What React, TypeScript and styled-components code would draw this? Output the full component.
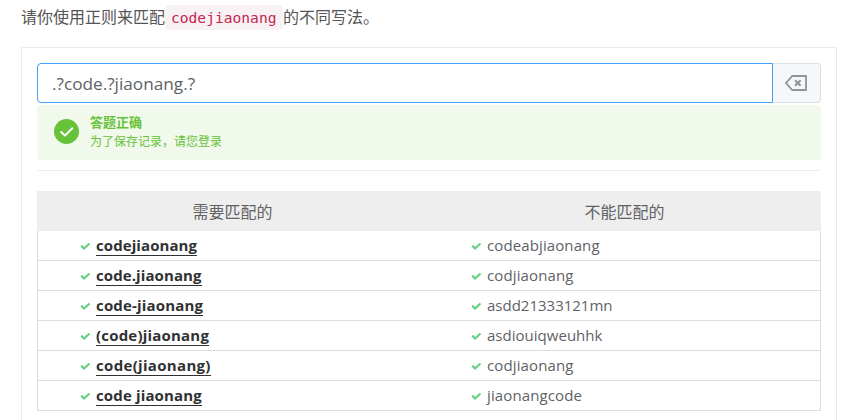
import React from "react";
import styled, { createGlobalStyle } from "styled-components";

const GlobalStyle = createGlobalStyle`
  * { box-sizing: border-box; }
  html, body { margin: 0; padding: 0; background: #fff; }
  body {
    height: 420px;
    overflow: hidden;
    font-family: "Open Sans", "Noto Sans CJK SC", sans-serif;
    color: #606266;
  }
`;

const Page = styled.main`
  height: 420px;
  padding: 5px 13px 0 21px;
  overflow: hidden;
`;

const Prompt = styled.p`
  display: flex;
  align-items: center;
  height: 25px;
  margin: 0 0 17px;
  font-size: 16px;
  line-height: 23px;
  white-space: nowrap;
  color: #555;
  font-family: "Noto Sans CJK SC", sans-serif;

  > span {
    height: 25px;
  }
`;

const InlineCode = styled.code`
  width: 118px;
  height: 25px;
  padding: 0 0 0 6px;
  border-radius: 4px;
  background: #f9f2f4;
  color: #c7254e;
  font: 14.6px/25px "DejaVu Sans Mono", monospace;
`;

const Card = styled.section`
  height: 400px;
  padding: 15px;
  border: 1px solid #ebebeb;
`;

const InputGroup = styled.div`
  display: flex;
  height: 40px;
`;

const Input = styled.input`
  width: 736px;
  height: 40px;
  padding: 0 14px;
  border: 1px solid #409eff;
  border-radius: 4px 0 0 4px;
  outline: none;
  background: #fff;
  color: #606266;
  font: 17.2px "Open Sans", sans-serif;
`;

const ClearButton = styled.button`
  display: flex;
  align-items: center;
  justify-content: center;
  width: 48px;
  height: 40px;
  padding: 0 2px 0 0;
  border: 1px solid #dcdfe6;
  border-left: 0;
  border-radius: 0 4px 4px 0;
  background: #f5f7fa;
  color: #909399;
`;

const Alert = styled.div`
  display: flex;
  align-items: flex-start;
  height: 55px;
  margin-top: 2px;
  padding: 14px 0 0 17px;
  gap: 10px;
  border-radius: 4px;
  background: #f0f9eb;
  color: #67c23a;
  font-family: "Noto Sans CJK SC", sans-serif;
`;

const AlertBody = styled.div`
  margin-top: -7px;
`;

const AlertTitle = styled.div`
  font-size: 13px;
  line-height: 19px;
  font-weight: 700;
`;

const AlertText = styled.div`
  font-size: 12px;
  line-height: 19px;
`;

const Divider = styled.hr`
  height: 1px;
  margin: 10px 0 20px;
  border: 0;
  background: #eee;
`;

const TableHead = styled.div`
  display: grid;
  grid-template-columns: 391px 393px;
  height: 40px;
  background: #eee;
  color: #606266;
  font: 16px/40px "Noto Sans CJK SC", sans-serif;
  text-align: center;
`;

const Row = styled.div`
  display: grid;
  grid-template-columns: 391px 1fr;
  height: 30px;
  border: solid #ddd;
  border-width: 0 1px 1px;
`;

const Cell = styled.div`
  display: flex;
  align-items: flex-start;
  padding-left: 42px;
  gap: 5px;
`;

const CheckIcon = styled.svg`
  width: 11px;
  height: 10px;
  margin-top: 10px;
`;

const Sample = styled.span<{ $matched?: boolean; $spacing: number }>`
  height: 25px;
  font-size: 15px;
  line-height: 28px;
  white-space: pre;
  font-weight: ${(p) => (p.$matched ? 700 : 400)};
  color: ${(p) => (p.$matched ? "#303133" : "#606266")};
  border-bottom: ${(p) => (p.$matched ? "1px solid #303133" : "0")};
  letter-spacing: ${(p) => p.$spacing}px;
`;

const rows: { wanted: string; wantedSpacing: number; unwanted: string; unwantedSpacing: number }[] = [
  { wanted: "codejiaonang", wantedSpacing: 0.08, unwanted: "codeabjiaonang", unwantedSpacing: 0.11 },
  { wanted: "code.jiaonang", wantedSpacing: 0.09, unwanted: "codjiaonang", unwantedSpacing: 0.13 },
  { wanted: "code-jiaonang", wantedSpacing: 0.18, unwanted: "asdd21333121mn", unwantedSpacing: 0 },
  { wanted: "(code)jiaonang", wantedSpacing: 0.2, unwanted: "asdiouiqweuhhk", unwantedSpacing: 0.02 },
  { wanted: "code(jiaonang)", wantedSpacing: 0.32, unwanted: "codjiaonang", unwantedSpacing: 0.13 },
  { wanted: "code jiaonang", wantedSpacing: 0.14, unwanted: "jiaonangcode", unwantedSpacing: 0.12 },
];

const Check = () => (
  <CheckIcon viewBox="0 0 11 10" fill="none">
    <path d="M1.2 4.6 4.1 7.5 9.5 2.5" stroke="#67cf82" strokeWidth="2.2" />
  </CheckIcon>
);

export default function App() {
  return (
    <>
      <GlobalStyle />
      <Page>
        <Prompt>
          <span>请你使用正则来匹配</span>
          <InlineCode>codejiaonang</InlineCode>
          <span>的不同写法。</span>
        </Prompt>
        <Card>
          <InputGroup>
            <Input defaultValue=".?code.?jiaonang.?" spellCheck={false} />
            <ClearButton aria-label="clear">
              <svg width="24" height="18" viewBox="0 0 24 18" fill="none" stroke="currentColor">
                <path d="M8.3 2H22V16H8.3L2 9Z" strokeWidth="1.8" />
                <path d="M11 6.2 16.6 11.8M16.6 6.2 11 11.8" strokeWidth="2" />
              </svg>
            </ClearButton>
          </InputGroup>
          <Alert>
            <svg width="26" height="26" viewBox="0 0 26 26" fill="none">
              <circle cx="12.5" cy="12.5" r="12.5" fill="#67c23a" />
              <path d="M7.2 13 11 16.6 18.3 9.2" stroke="#fff" strokeWidth="2" strokeLinecap="round" strokeLinejoin="round" />
            </svg>
            <AlertBody>
              <AlertTitle>答题正确</AlertTitle>
              <AlertText>为了保存记录，请您登录</AlertText>
            </AlertBody>
          </Alert>
          <Divider />
          <TableHead>
            <span>需要匹配的</span>
            <span>不能匹配的</span>
          </TableHead>
          {rows.map((row) => (
            <Row key={row.wanted}>
              <Cell>
                <Check />
                <Sample $matched $spacing={row.wantedSpacing}>{row.wanted}</Sample>
              </Cell>
              <Cell>
                <Check />
                <Sample $spacing={row.unwantedSpacing}>{row.unwanted}</Sample>
              </Cell>
            </Row>
          ))}
        </Card>
      </Page>
    </>
  );
}
